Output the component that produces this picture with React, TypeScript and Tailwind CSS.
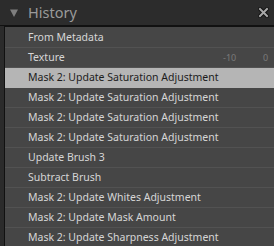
const rows = [
  "From Metadata",
  "Texture",
  "Mask 2: Update Saturation Adjustment",
  "Mask 2: Update Saturation Adjustment",
  "Mask 2: Update Saturation Adjustment",
  "Mask 2: Update Saturation Adjustment",
  "Update Brush 3",
  "Subtract Brush",
  "Mask 2: Update Whites Adjustment",
  "Mask 2: Update Mask Amount",
  "Mask 2: Update Sharpness Adjustment",
];

export default function App() {
  return (
    <div
      className="w-[274px] h-[246px] overflow-hidden bg-[#2b2b2b] select-none"
      style={{ fontFamily: '"Noto Sans", "Liberation Sans", sans-serif' }}
    >
      <div className="h-[26px] flex items-center border-b border-[#111] bg-[#2c2c2c]">
        <span className="ml-[10px] w-[8px]">
          <svg width="8" height="8" viewBox="0 0 8 8">
            <path d="M0 0.5 H8 L4 8 Z" fill="#7e7e7e" />
          </svg>
        </span>
        <span className="ml-[10px] text-[14.5px] leading-none text-[#9a9a9a]">
          History
        </span>
        <span className="ml-auto mr-[5px] flex items-center">
          <svg width="11" height="11" viewBox="0 0 11 11">
            <path
              d="M2 2 L9 9 M9 2 L2 9"
              stroke="#111"
              strokeWidth="4"
              strokeLinecap="square"
            />
            <path
              d="M2 2 L9 9 M9 2 L2 9"
              stroke="#a8a8a8"
              strokeWidth="2"
              strokeLinecap="square"
            />
          </svg>
        </span>
      </div>
      <div className="flex pl-[4px]">
        <div className="flex-1 border-l border-t border-[#111] bg-[#464646] pt-[1px]">
          {rows.map((r, i) => (
            <div
              key={i}
              className={
                i === 2
                  ? "h-[20px] flex items-center bg-[#b5b5b5] text-[#1c1c1c] text-[10.5px] pl-[23px]"
                  : "h-[20px] flex items-center border-b border-[#525252] text-[#d6d6d6] text-[10.5px] pl-[23px]"
              }
            >
              <span>{r}</span>
              {i === 1 && (
                <span className="ml-auto flex text-[9px] text-[#7a7a7a]">
                  <span className="w-[40px]">-10</span>
                  <span className="w-[11px]">0</span>
                </span>
              )}
            </div>
          ))}
        </div>
      </div>
    </div>
  );
}
